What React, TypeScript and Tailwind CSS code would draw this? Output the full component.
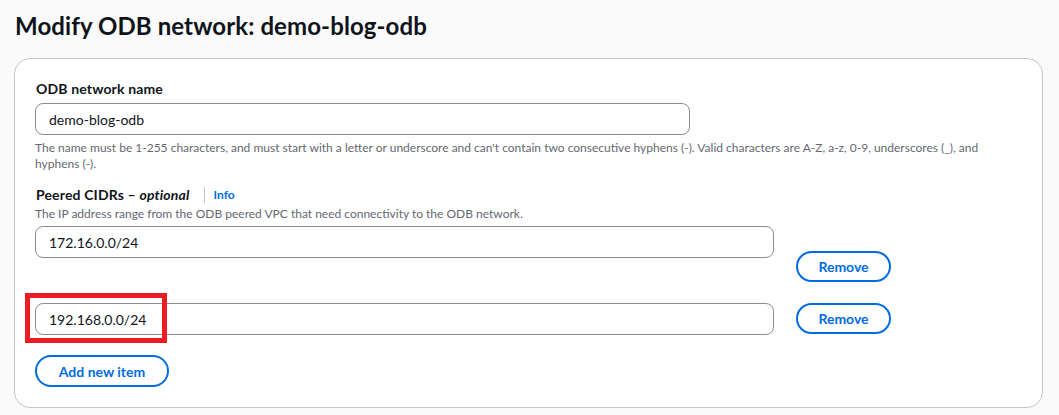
import React from "react";

const font = { fontFamily: '"Lato", "Liberation Sans", sans-serif' };

function Input({ value, w }: { value: string; w: string }) {
  return (
    <div
      className={`${w} h-[32px] border border-[#8c8c94] rounded-[8px] bg-white flex items-center pl-[13px] text-[14px] text-[#0f141a]`}
    >
      {value}
    </div>
  );
}

function OutlineButton({ label, w }: { label: string; w: string }) {
  return (
    <button
      className={`${w} h-[31px] rounded-full border-2 border-[#006ce0] text-[#006ce0] text-[14px] font-bold flex items-center justify-center bg-white`}
    >
      {label}
    </button>
  );
}

export default function App() {
  return (
    <div className="min-h-screen bg-[#fafafa] pl-[14px] pt-[11px]" style={font}>
      <h1 className="text-[24px] leading-[30px] font-bold text-[#0f141a] pl-[1px] tracking-[0.1px]">
        Modify ODB network: demo-blog-odb
      </h1>
      <div className="mt-[17px] w-[1029px] h-[350px] border border-[#c6c6cd] rounded-[16px] bg-white pl-[20px] pt-[19px]">
        <div className="text-[14px] leading-[22px] font-bold text-[#0f141a] pl-[1px] tracking-[0.15px]">
          ODB network name
        </div>
        <div className="mt-[3px]">
          <Input value="demo-blog-odb" w="w-[655px]" />
        </div>
        <p className="mt-[5px] w-[985px] text-[12px] leading-[16px] text-[#656871]">
          The name must be 1-255 characters, and must start with a letter or underscore and can't
          contain two consecutive hyphens (-). Valid characters are A-Z, a-z, 0-9, underscores (_),
          and hyphens (-).
        </p>
        <div className="mt-[12px] flex items-center text-[14px] leading-[22px] text-[#0f141a] pl-[1px]">
          <span className="font-bold tracking-[0.15px]">
            Peered CIDRs – <i>optional</i>
          </span>
          <span className="ml-[14px] h-[16px] w-px bg-[#c6c6cd]" />
          <span className="ml-[9px] text-[12px] font-bold text-[#006ce0]">Info</span>
        </div>
        <p className="text-[12px] leading-[16px] text-[#656871]">
          The IP address range from the ODB peered VPC that need connectivity to the ODB network.
        </p>
        <div className="mt-[4px] flex items-start gap-[22px]">
          <Input value="172.16.0.0/24" w="w-[739px]" />
          <div className="pt-[25px]">
            <OutlineButton label="Remove" w="w-[95px]" />
          </div>
        </div>
        <div className="mt-[21px] flex items-start gap-[22px]">
          <div className="relative">
            <Input value="192.168.0.0/24" w="w-[739px]" />
            <div className="absolute left-[-10px] top-[-10px] w-[142px] h-[50px] border-[5px] border-[#ec1c24]" />
          </div>
          <OutlineButton label="Remove" w="w-[95px]" />
        </div>
        <div className="mt-[20px]">
          <OutlineButton label="Add new item" w="w-[134px] h-[32px]" />
        </div>
      </div>
    </div>
  );
}
